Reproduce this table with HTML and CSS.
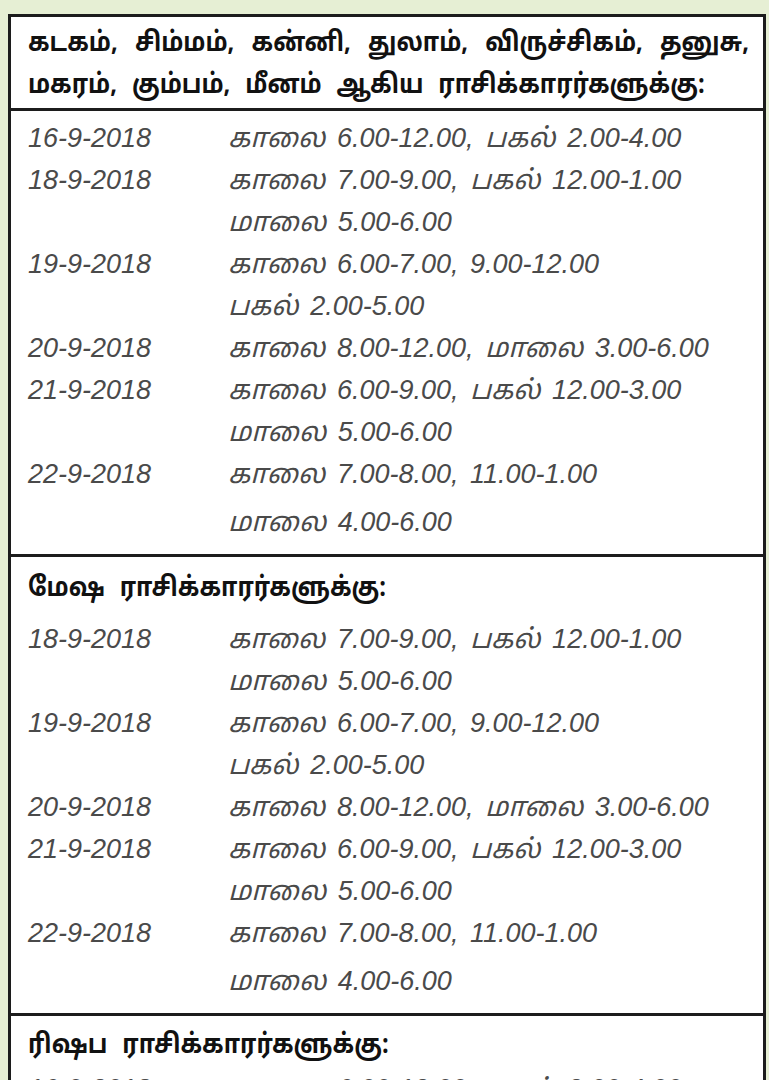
FILE: index.html
```html
<!DOCTYPE html>
<html lang="ta">
<head>
<meta charset="utf-8">
<title>ராசிக்காரர்களுக்கு</title>
<link rel="stylesheet" href="styles.css">
</head>
<body>
<div class="sheet">
  <section class="group group-first">
    <div class="head head-ruled">
      <div class="head-line justify">கடகம், சிம்மம், கன்னி, துலாம், விருச்சிகம், தனுசு,</div>
      <div class="head-line">மகரம், கும்பம், மீனம் ஆகிய ராசிக்காரர்களுக்கு:</div>
    </div>
    <div class="rows">
      <div class="row"><div class="date">16-9-2018</div><div class="times"><div>காலை 6.00-12.00, பகல் 2.00-4.00</div></div></div>
      <div class="row"><div class="date">18-9-2018</div><div class="times"><div>காலை 7.00-9.00, பகல் 12.00-1.00</div><div>மாலை 5.00-6.00</div></div></div>
      <div class="row"><div class="date">19-9-2018</div><div class="times"><div>காலை 6.00-7.00, 9.00-12.00</div><div>பகல் 2.00-5.00</div></div></div>
      <div class="row"><div class="date">20-9-2018</div><div class="times"><div>காலை 8.00-12.00, மாலை 3.00-6.00</div></div></div>
      <div class="row"><div class="date">21-9-2018</div><div class="times"><div>காலை 6.00-9.00, பகல் 12.00-3.00</div><div>மாலை 5.00-6.00</div></div></div>
      <div class="row"><div class="date">22-9-2018</div><div class="times"><div>காலை 7.00-8.00, 11.00-1.00</div><div class="late">மாலை 4.00-6.00</div></div></div>
    </div>
  </section>
  <section class="group group-second">
    <div class="head">
      <div class="head-line">மேஷ ராசிக்காரர்களுக்கு:</div>
    </div>
    <div class="rows">
      <div class="row"><div class="date">18-9-2018</div><div class="times"><div>காலை 7.00-9.00, பகல் 12.00-1.00</div><div>மாலை 5.00-6.00</div></div></div>
      <div class="row"><div class="date">19-9-2018</div><div class="times"><div>காலை 6.00-7.00, 9.00-12.00</div><div>பகல் 2.00-5.00</div></div></div>
      <div class="row"><div class="date">20-9-2018</div><div class="times"><div>காலை 8.00-12.00, மாலை 3.00-6.00</div></div></div>
      <div class="row"><div class="date">21-9-2018</div><div class="times"><div>காலை 6.00-9.00, பகல் 12.00-3.00</div><div>மாலை 5.00-6.00</div></div></div>
      <div class="row"><div class="date">22-9-2018</div><div class="times"><div>காலை 7.00-8.00, 11.00-1.00</div><div class="late">மாலை 4.00-6.00</div></div></div>
    </div>
  </section>
  <section class="group group-third">
    <div class="head">
      <div class="head-line">ரிஷப ராசிக்காரர்களுக்கு:</div>
    </div>
    <div class="rows">
      <div class="row"><div class="date">16-9-2018</div><div class="times"><div>காலை 6.00-12.00, பகல் 2.00-4.00</div></div></div>
    </div>
  </section>
</div>
</body>
</html>
```
FILE: styles.css
```css
html, body {
  margin: 0;
  padding: 0;
}
body {
  background: #e6efd4;
  height: 1080px;
  overflow: hidden;
}
.sheet {
  margin: 14px 0 0 8px;
  width: 758px;
  box-sizing: border-box;
  background: #fff;
  border: 3px solid #1c1c1c;
  border-bottom: none;
}
.group {
  border-bottom: 3px solid #1c1c1c;
}
.head {
  padding: 7px 14px 0 17px;
  font-family: "Noto Sans Tamil", "Lohit Tamil", "Noto Sans", sans-serif;
  font-weight: 700;
  font-size: 27px;
  word-spacing: 10px;
  line-height: 42px;
  color: #111;
  overflow: hidden;
}
.head-line {
  width: calc(100% / 0.875);
  transform: scaleX(0.875);
  transform-origin: 0 0;
  white-space: nowrap;
}
.head-ruled {
  border-bottom: 3px solid #1c1c1c;
}
.head-line.justify {
  white-space: normal;
  text-align: justify;
  text-align-last: justify;
}
.rows {
  padding: 6px 0 11px 17px;
  font-family: "Liberation Sans", "Noto Sans Tamil", sans-serif;
  font-style: italic;
  font-size: 27px;
  line-height: 42px;
  word-spacing: 4px;
  color: #4a4a4a;
}
.group-second .head {
  padding-top: 12px;
}
.group-second .rows {
  padding-top: 7px;
}
.group-third .head {
  padding-top: 10px;
}
.group-third .rows {
  padding-top: 0;
}
.row {
  display: grid;
  grid-template-columns: 200px 1fr;
}
.late {
  margin-top: 6px;
}
```
